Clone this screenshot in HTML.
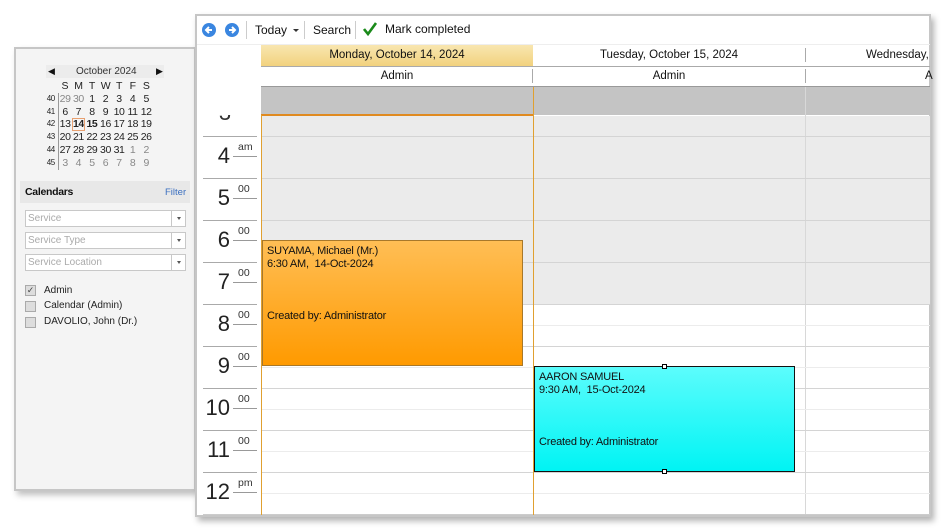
<!DOCTYPE html>
<html><head><meta charset="utf-8"><style>
*{margin:0;padding:0;box-sizing:border-box}
body{width:947px;height:532px;background:#fff;position:relative;overflow:hidden;font-family:"Liberation Sans",sans-serif;font-size:11.5px;color:#111}
.a{position:absolute}
#left{left:14px;top:47px;width:182px;height:444px;background:#f4f4f4;border:2px solid #c6c6c6;box-shadow:3px 4px 6px rgba(0,0,0,.25)}
#main{left:195px;top:14px;width:736px;height:503px;background:#fff;border:2px solid #c6c6c6;box-shadow:3px 4px 6px rgba(0,0,0,.3)}
.cal{table-layout:fixed;border-collapse:collapse;width:109px}
.cal td{font-size:10.5px;letter-spacing:-.4px;text-align:center;width:13.5px;height:12.8px;line-height:12.8px;color:#222;padding:0;white-space:nowrap}
.cal td.wk{width:14px}
.g{color:#888!important}
.wk{font-size:8px!important;color:#333;border-right:1px solid #999}
.dd{left:25px;width:161px;height:17px;border:1px solid #c8c8c8;background:#fff;color:#aaa;font-size:10px;line-height:15px;padding-left:2px}
.dd:after{content:"";position:absolute;right:0;top:0;width:13px;height:15px;border-left:1px solid #c8c8c8}
.dd i{position:absolute;right:4px;top:6px;border:2.5px solid transparent;border-top:3px solid #555}
.cb{left:25px;width:11px;height:11px;border:1px solid #aaa;background:#ddd}
.cl{left:44px;font-size:10px;color:#222}
.hl{height:1px;background:#d4d4d4}
.hh{height:1px;background:#ececec}
.num{width:60px;text-align:right;font-size:22px;color:#222;left:170px}
.sm{font-size:10.5px;color:#333;left:238px}
.ul{left:233px;width:24px;height:1px;background:#999}
.ev{font-size:11px;letter-spacing:-.2px;line-height:13px;padding:4px 4px;color:#111}
</style></head><body>
<div id="left" class="a">
 <div class="a" style="left:30px;top:16px;width:118px;height:13px;background:#ececec"></div>
 <div class="a" style="left:32px;top:17px;font-size:9px">&#9664;</div>
 <div class="a" style="left:140px;top:17px;font-size:9px">&#9654;</div>
 <div class="a" style="left:60px;top:17px;font-size:10px;color:#333">October 2024</div>
 <table class="a cal" style="left:28px;top:31px">
  <tr><td class="wk" style="border:0"></td><td>S</td><td>M</td><td>T</td><td>W</td><td>T</td><td>F</td><td>S</td></tr>
  <tr><td class="wk">40</td><td class="g">29</td><td class="g">30</td><td>1</td><td>2</td><td>3</td><td>4</td><td>5</td></tr>
  <tr><td class="wk">41</td><td>6</td><td>7</td><td>8</td><td>9</td><td>10</td><td>11</td><td>12</td></tr>
  <tr><td class="wk">42</td><td>13</td><td style="font-weight:bold;outline:1px solid #e8a070;outline-offset:-1px">14</td><td style="font-weight:bold">15</td><td>16</td><td>17</td><td>18</td><td>19</td></tr>
  <tr><td class="wk">43</td><td>20</td><td>21</td><td>22</td><td>23</td><td>24</td><td>25</td><td>26</td></tr>
  <tr><td class="wk">44</td><td>27</td><td>28</td><td>29</td><td>30</td><td>31</td><td class="g">1</td><td class="g">2</td></tr>
  <tr><td class="wk">45</td><td class="g">3</td><td class="g">4</td><td class="g">5</td><td class="g">6</td><td class="g">7</td><td class="g">8</td><td class="g">9</td></tr>
 </table>
</div>
<div class="a" style="left:20px;top:181px;width:170px;height:22px;background:#e8e8e8"></div>
<div class="a" style="left:25px;top:186px;font-size:10.5px;font-weight:bold;letter-spacing:-.3px">Calendars</div>
<div class="a" style="left:165px;top:187px;font-size:9.5px;color:#3a6fc0">Filter</div>
<div class="a dd" style="top:210px">Service<i></i></div>
<div class="a dd" style="top:232px">Service Type<i></i></div>
<div class="a dd" style="top:254px">Service Location<i></i></div>
<div class="a cb" style="top:285px;font-size:9px;line-height:9px;text-align:center;color:#444">&#10003;</div>
<div class="a cb" style="top:301px"></div>
<div class="a cb" style="top:317px"></div>
<div class="a cl" style="top:285px">Admin</div>
<div class="a cl" style="top:300px">Calendar (Admin)</div>
<div class="a cl" style="top:316px">DAVOLIO, John (Dr.)</div>

<div id="main" class="a"></div>
<svg class="a" style="left:201px;top:22px" width="40" height="16"><circle cx="8" cy="8" r="7" fill="#3a86e0"/><path d="M11 8H5M8 5L5 8l3 3" stroke="#fff" stroke-width="2" fill="none"/><circle cx="31" cy="8" r="7" fill="#3a86e0"/><path d="M28 8h6M31 5l3 3-3 3" stroke="#fff" stroke-width="2" fill="none"/></svg>
<div class="a" style="left:246px;top:21px;width:1px;height:18px;background:#ccc"></div>
<div class="a" style="left:255px;top:23px;font-size:12px">Today</div>
<div class="a" style="left:293px;top:29px;border:3px solid transparent;border-top:3px solid #333"></div>
<div class="a" style="left:304px;top:21px;width:1px;height:18px;background:#ccc"></div>
<div class="a" style="left:313px;top:23px;font-size:12px">Search</div>
<div class="a" style="left:355px;top:21px;width:1px;height:18px;background:#ccc"></div>
<svg class="a" style="left:363px;top:22px" width="14" height="14"><path d="M1 7l4 5 8-11" stroke="#1a8a1a" stroke-width="2.6" fill="none"/></svg>
<div class="a" style="left:385px;top:22px;font-size:12px">Mark completed</div>
<div class="a" style="left:197px;top:44px;width:733px;height:1px;background:#eee"></div>
<div class="a" style="left:261px;top:45px;width:272px;height:21px;background:linear-gradient(#f8e6b0,#f2d27e);text-align:center;line-height:21px">Monday, October 14, 2024</div>
<div class="a" style="left:533px;top:45px;width:272px;height:21px;text-align:center;line-height:21px">Tuesday, October 15, 2024</div>
<div class="a" style="left:805px;top:48px;width:1px;height:14px;background:#aaa"></div>
<div class="a" style="left:866px;top:45px;line-height:21px">Wednesday, </div>
<div class="a" style="left:261px;top:66px;width:669px;height:1px;background:#aaa"></div>
<div class="a" style="left:261px;top:67px;width:272px;height:19px;text-align:center;line-height:19px">Admin</div>
<div class="a" style="left:533px;top:67px;width:272px;height:19px;text-align:center;line-height:19px">Admin</div>
<div class="a" style="left:532px;top:69px;width:1px;height:14px;background:#aaa"></div>
<div class="a" style="left:805px;top:69px;width:1px;height:14px;background:#aaa"></div>
<div class="a" style="left:925px;top:67px;line-height:19px">A</div>
<div class="a" style="left:261px;top:86px;width:669px;height:1px;background:#999"></div>
<div class="a" style="left:261px;top:87px;width:669px;height:28px;background:#c4c4c4"></div>
<div class="a" style="left:261px;top:114px;width:272px;height:2px;background:#e08a20"></div>
<div class="a" style="left:261px;top:116px;width:669px;height:188px;background:#ebebeb"></div>
<div class="a" style="left:197px;top:115px;width:64px;height:400px;background:#fff"></div>
<div class="a" style="left:210px;top:100px;width:30px;text-align:center;font-size:22px;color:#333;clip-path:inset(15px 0 0 0)">3</div>
<div class="a" style="left:805px;top:87px;width:1px;height:428px;background:#d8d8d8"></div>

<div class="a hl" style="left:261px;top:136px;width:669px"></div><div class="a hl" style="left:203px;top:136px;width:54px;background:#aaa"></div>
<div class="a hl" style="left:261px;top:178px;width:669px"></div><div class="a hl" style="left:203px;top:178px;width:54px;background:#aaa"></div>
<div class="a hl" style="left:261px;top:220px;width:669px"></div><div class="a hl" style="left:203px;top:220px;width:54px;background:#aaa"></div>
<div class="a hl" style="left:261px;top:262px;width:669px"></div><div class="a hl" style="left:203px;top:262px;width:54px;background:#aaa"></div>
<div class="a hl" style="left:261px;top:304px;width:669px"></div><div class="a hl" style="left:203px;top:304px;width:54px;background:#aaa"></div>
<div class="a hl" style="left:261px;top:346px;width:669px"></div><div class="a hl" style="left:203px;top:346px;width:54px;background:#aaa"></div>
<div class="a hl" style="left:261px;top:388px;width:669px"></div><div class="a hl" style="left:203px;top:388px;width:54px;background:#aaa"></div>
<div class="a hl" style="left:261px;top:430px;width:669px"></div><div class="a hl" style="left:203px;top:430px;width:54px;background:#aaa"></div>
<div class="a hl" style="left:261px;top:472px;width:669px"></div><div class="a hl" style="left:203px;top:472px;width:54px;background:#aaa"></div>
<div class="a hl" style="left:203px;top:514px;width:727px;background:#ccc"></div>
<div class="a hh" style="left:261px;top:325px;width:669px"></div>
<div class="a hh" style="left:261px;top:367px;width:669px"></div>
<div class="a hh" style="left:261px;top:409px;width:669px"></div>
<div class="a hh" style="left:261px;top:451px;width:669px"></div>
<div class="a hh" style="left:261px;top:493px;width:669px"></div>
<div class="a" style="left:261px;top:115px;width:1px;height:400px;background:#e0a030"></div>
<div class="a" style="left:533px;top:87px;width:1px;height:428px;background:#e0a030"></div>

<div class="a num" style="top:143px">4</div><div class="a sm" style="top:141px">am</div><div class="a ul" style="top:156px"></div>
<div class="a num" style="top:185px">5</div><div class="a sm" style="top:183px">00</div><div class="a ul" style="top:198px"></div>
<div class="a num" style="top:227px">6</div><div class="a sm" style="top:225px">00</div><div class="a ul" style="top:240px"></div>
<div class="a num" style="top:269px">7</div><div class="a sm" style="top:267px">00</div><div class="a ul" style="top:282px"></div>
<div class="a num" style="top:311px">8</div><div class="a sm" style="top:309px">00</div><div class="a ul" style="top:324px"></div>
<div class="a num" style="top:353px">9</div><div class="a sm" style="top:351px">00</div><div class="a ul" style="top:366px"></div>
<div class="a num" style="top:395px">10</div><div class="a sm" style="top:393px">00</div><div class="a ul" style="top:408px"></div>
<div class="a num" style="top:437px">11</div><div class="a sm" style="top:435px">00</div><div class="a ul" style="top:450px"></div>
<div class="a num" style="top:479px">12</div><div class="a sm" style="top:477px">pm</div><div class="a ul" style="top:492px"></div>

<div class="a ev" style="left:262px;top:240px;width:261px;height:126px;background:linear-gradient(#ffbe55,#ff9a00);border:1px solid #a8782a">SUYAMA, Michael (Mr.)<br>6:30 AM,&nbsp; 14-Oct-2024<br><br><br><br>Created by: Administrator</div>
<div class="a ev" style="left:534px;top:366px;width:261px;height:106px;background:linear-gradient(#5cfcfc,#00f4f4);border:1px solid #111">AARON SAMUEL<br>9:30 AM,&nbsp; 15-Oct-2024<br><br><br><br>Created by: Administrator</div>
<div class="a" style="left:662px;top:364px;width:5px;height:5px;border:1px solid #000;background:#fff"></div>
<div class="a" style="left:662px;top:469px;width:5px;height:5px;border:1px solid #000;background:#fff"></div>
</body></html>
